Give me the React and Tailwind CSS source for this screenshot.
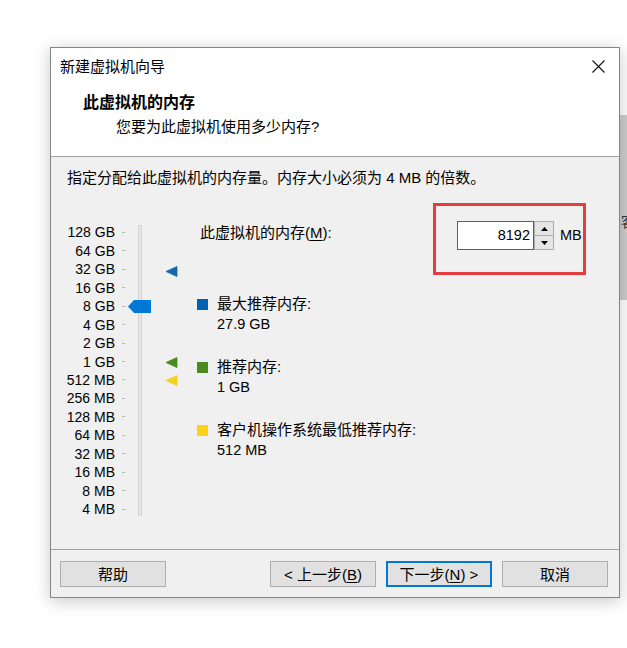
import React from "react";

const font = "font-['Liberation_Sans','Noto_Sans_CJK_SC',sans-serif]";

const sizes = [
  "128 GB", "64 GB", "32 GB", "16 GB", "8 GB", "4 GB", "2 GB", "1 GB",
  "512 MB", "256 MB", "128 MB", "64 MB", "32 MB", "16 MB", "8 MB", "4 MB",
];

function Marker({ color, top }) {
  return (
    <svg
      width="12"
      height="11"
      viewBox="0 0 12 11"
      className="absolute left-[115px]"
      style={{ top }}
    >
      <polygon points="0,5.5 11,0.5 11,10.5" fill={color} stroke={color} strokeWidth="0.8" strokeLinejoin="round" />
    </svg>
  );
}

function LegendItem({ color, label, value }) {
  return (
    <div className="flex">
      <div className={`w-[11px] h-[11px] mt-[5px] ${color}`} />
      <div className="ml-[9px] leading-[20px]">
        <div className="text-[15px]">{label}</div>
        <div className="text-[14.5px]">{value}</div>
      </div>
    </div>
  );
}

function Button({ children, primary }) {
  return (
    <button
      className={`w-[106px] h-[26px] bg-[#e1e1e1] text-[15px] text-black leading-none flex items-center justify-center ${
        primary ? "border-2 border-[#0078d7]" : "border border-[#adadad]"
      }`}
    >
      {children}
    </button>
  );
}

export default function App() {
  return (
    <div className={`relative w-[627px] h-[648px] bg-white overflow-hidden ${font} text-[#000]`}>
      {/* window behind the dialog */}
      <div className="absolute left-[620px] top-[115px] w-[7px] h-[185px] bg-[#cdcdcd] overflow-hidden">
        <span className="absolute left-[1px] top-[100px] text-[14px] leading-none text-[#333]">客</span>
      </div>

      <div className="relative ml-[50px] mt-[47px] w-[570px] h-[551px] border border-[#858585] bg-[#f0f0f0] shadow-[0_3px_16px_rgba(0,0,0,0.22)]">
        {/* header */}
        <div className="h-[108px] bg-white border-b border-[#a0a0a0] box-content">
          <div className="flex items-start justify-between pt-[9px]">
            <div className="ml-[9px] text-[15px] leading-[20px]">新建虚拟机向导</div>
            <svg width="13" height="13" viewBox="0 0 13 13" className="mr-[14px] mt-[3px]">
              <path d="M0.5 0.5 L12.5 12.5 M12.5 0.5 L0.5 12.5" stroke="#111" strokeWidth="1.1" />
            </svg>
          </div>
          <div className="ml-[32px] mt-[16px] text-[16px] font-bold leading-[20px]">此虚拟机的内存</div>
          <div className="ml-[65px] mt-[4px] text-[15px] leading-[20px]">您要为此虚拟机使用多少内存?</div>
        </div>

        {/* body */}
        <div className="h-[392px] pt-[11px]">
          <div className="ml-[16px] text-[15px] leading-[20px]">
            指定分配给此虚拟机的内存量。内存大小必须为 4 MB 的倍数。
          </div>

          <div className="flex mt-[15px]">
            {/* slider */}
            <div className="relative flex w-[146px] shrink-0">
              <div className="pt-[20px]">
                {sizes.map((s) => (
                  <div key={s} className="flex items-center h-[18.47px]">
                    <div className="w-[64px] text-right text-[14px] leading-none">{s}</div>
                    <div className="ml-[7px] w-[3px] h-px bg-[#b8b8b8]" />
                  </div>
                ))}
              </div>
              <div className="ml-[13px] mt-[22px] w-[4px] h-[291px] bg-[#e6e6e6] border border-[#d4d4d4]" />

              <svg width="23" height="13" viewBox="0 0 23 13" className="absolute left-[77px] top-[97px]">
                <polygon points="0,6.5 6,0 23,0 23,13 6,13" fill="#0078d7" />
              </svg>
              <Marker color="#1565b0" top={63} />
              <Marker color="#4a8b1f" top={154} />
              <Marker color="#f5d21b" top={172} />
            </div>

            {/* right side */}
            <div className="flex-1 flex flex-col">
              <div className="flex justify-between">
                <div className="ml-[3px] mt-[20px] text-[15px] leading-[20px]">
                  此虚拟机的内存(<span className="underline underline-offset-2">M</span>):
                </div>
                <div className="mr-[33px] w-[153px] h-[72px] border-[3px] border-[#e53d3d] pl-[21px] pt-[15px]">
                  <div className="flex items-center">
                    <div className="w-[77px] h-[29px] border border-[#0078d7] bg-white flex items-center justify-end pr-[3px] text-[14.5px]">
                      8192
                    </div>
                    <div className="w-[20px] h-[29px] flex flex-col">
                      <div className="h-[15px] border border-[#adadad] bg-[#e5e5e5] flex items-center justify-center">
                        <svg width="7" height="4" viewBox="0 0 7 4"><polygon points="3.5,0 7,4 0,4" fill="#000" /></svg>
                      </div>
                      <div className="h-[14px] border border-t-0 border-[#adadad] bg-[#e5e5e5] flex items-center justify-center">
                        <svg width="7" height="4" viewBox="0 0 7 4"><polygon points="0,0 7,0 3.5,4" fill="#000" /></svg>
                      </div>
                    </div>
                    <div className="ml-[6px] text-[14.5px]">MB</div>
                  </div>
                </div>
              </div>

              <div className="mt-[19px] flex flex-col gap-[23px]">
                <LegendItem color="bg-[#0063b1]" label="最大推荐内存:" value="27.9 GB" />
                <LegendItem color="bg-[#4a8b1f]" label="推荐内存:" value="1 GB" />
                <LegendItem color="bg-[#fcd116]" label="客户机操作系统最低推荐内存:" value="512 MB" />
              </div>
            </div>
          </div>
        </div>

        {/* footer */}
        <div className="border-t border-[#a0a0a0] h-[48px] pt-[11px] flex">
          <div className="ml-[9px]">
            <Button>帮助</Button>
          </div>
          <div className="ml-auto mr-[11px] flex gap-[10px]">
            <Button>
              &lt; 上一步(<span className="underline underline-offset-2">B</span>)
            </Button>
            <Button primary>
              下一步(<span className="underline underline-offset-2">N</span>) &gt;
            </Button>
            <Button>取消</Button>
          </div>
        </div>
      </div>
    </div>
  );
}
